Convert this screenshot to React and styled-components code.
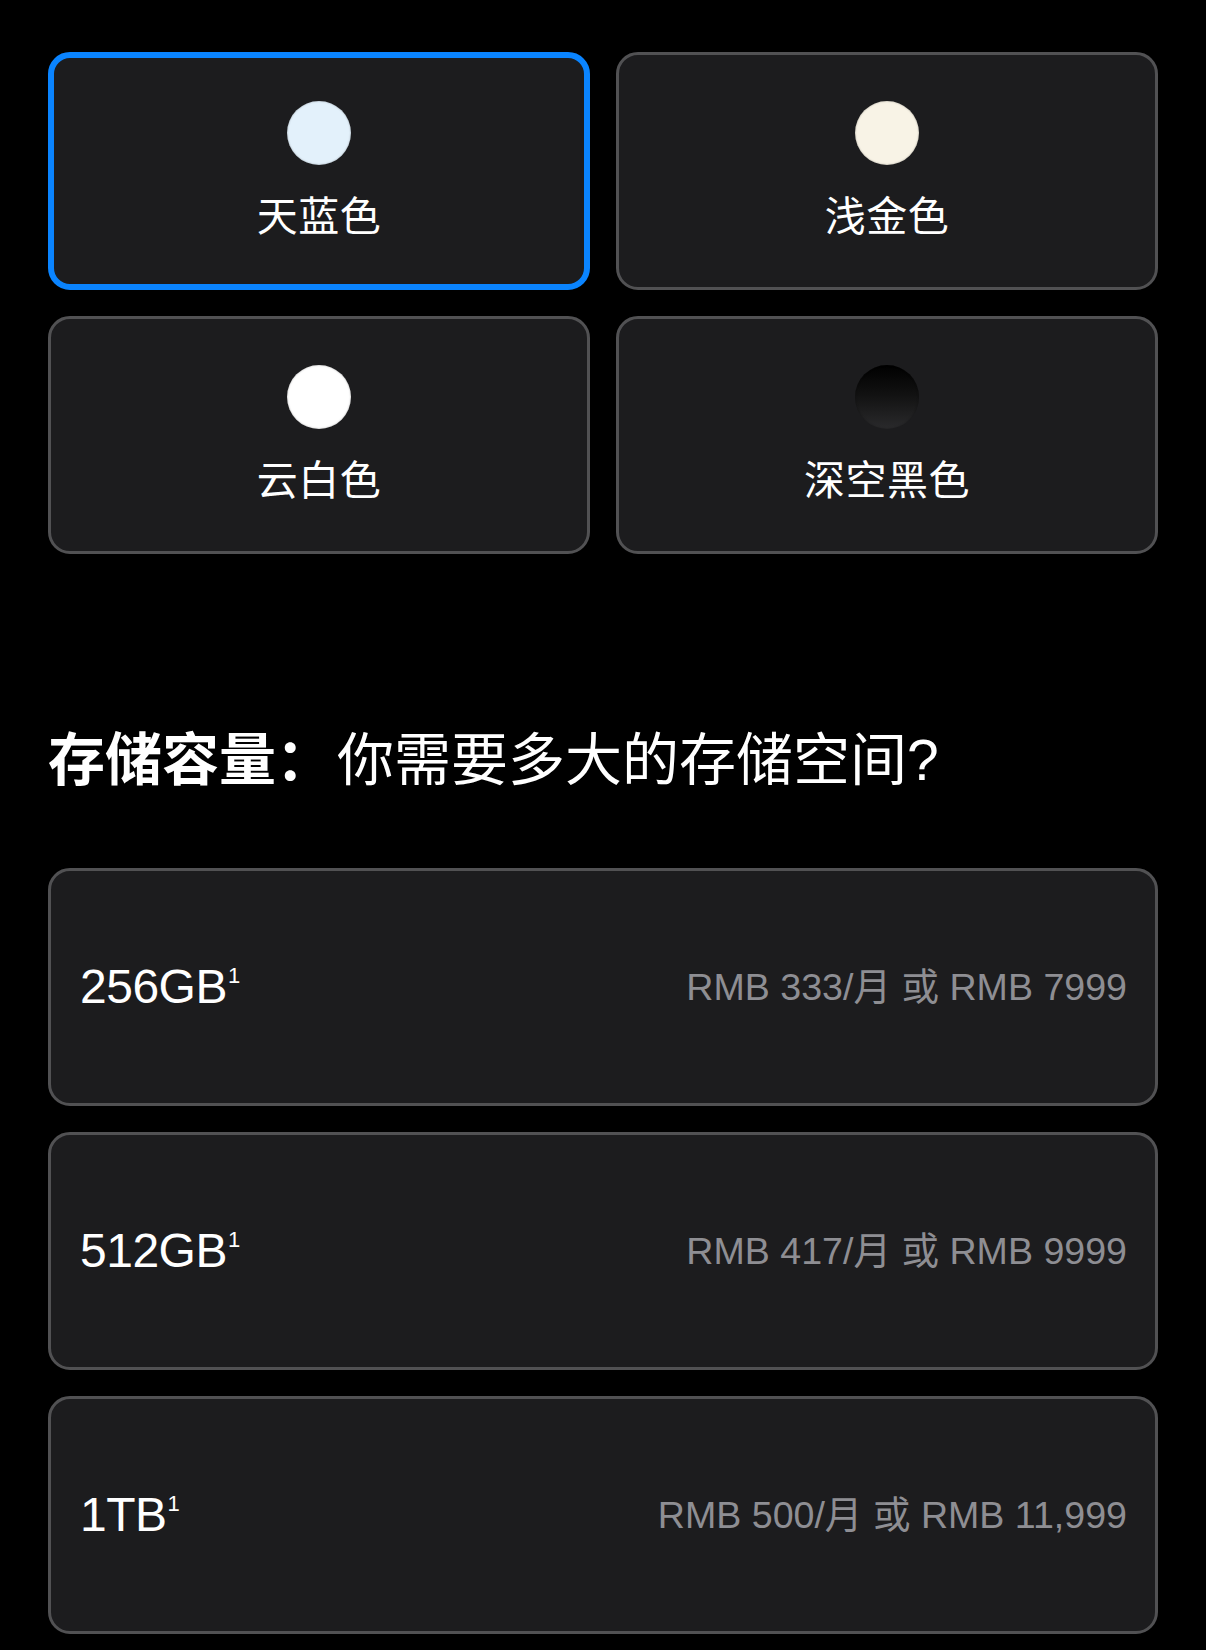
import React from 'react';
import styled, { createGlobalStyle } from 'styled-components';

const GlobalStyle = createGlobalStyle`
  html, body {
    margin: 0;
    padding: 0;
    background: #000;
  }
  body {
    font-family: "Liberation Sans", "Noto Sans CJK SC", sans-serif;
    color: #f5f5f7;
  }
`;

const Page = styled.div`
  padding: 52px 48px 0;
  box-sizing: border-box;
  width: 1206px;
`;

const ColorGrid = styled.div`
  display: grid;
  grid-template-columns: 1fr 1fr;
  gap: 26px;
`;

const ColorCard = styled.div`
  box-sizing: border-box;
  height: 238px;
  background: #1c1c1e;
  border: ${(p) => (p.selected ? '6px solid #0a84ff' : '3px solid #515153')};
  border-radius: 22px;
  display: flex;
  flex-direction: column;
  align-items: center;
  justify-content: center;
  gap: 27px;
`;

const Swatch = styled.span`
  width: 64px;
  height: 64px;
  border-radius: 50%;
  background: ${(p) => p.fill};
  box-shadow: inset 0 0 2px rgba(0, 0, 0, 0.35);
`;

const ColorName = styled.span`
  font-size: 41px;
  line-height: 50px;
  color: #fff;
  letter-spacing: 0.5px;
`;

const Heading = styled.h2`
  margin: 172px 0 74px;
  font-size: 57px;
  line-height: 68px;
  font-weight: 400;
  color: #fff;
`;

const HeadingStrong = styled.strong`
  font-weight: 700;
  margin-right: 4px;
`;

const StorageList = styled.div`
  display: flex;
  flex-direction: column;
  gap: 26px;
`;

const StorageCard = styled.div`
  box-sizing: border-box;
  height: 238px;
  background: #1c1c1e;
  border: 3px solid #515153;
  border-radius: 22px;
  padding: 0 28px 0 29px;
  display: flex;
  align-items: center;
  justify-content: space-between;
`;

const Capacity = styled.span`
  font-size: 48px;
  color: #fff;
  letter-spacing: -0.5px;
  padding-bottom: 2px;
`;

const Note = styled.sup`
  font-size: 22px;
  vertical-align: 20px;
  line-height: 0;
  margin-left: 1px;
`;

const Price = styled.span`
  font-size: 37.6px;
  color: #8e8e93;
  padding-bottom: 8px;
`;

const colors = [
  { name: '天蓝色', fill: '#e3f1fb', selected: true },
  { name: '浅金色', fill: '#f8f3e6' },
  { name: '云白色', fill: '#ffffff' },
  { name: '深空黑色', fill: 'linear-gradient(180deg, #000 0%, #111 45%, #2a2a2c 100%)' },
];

const storage = [
  { size: '256GB', price: 'RMB 333/月 或 RMB 7999' },
  { size: '512GB', price: 'RMB 417/月 或 RMB 9999' },
  { size: '1TB', price: 'RMB 500/月 或 RMB 11,999' },
];

const App = () => {
  return (
    <>
      <GlobalStyle />
      <Page>
        <ColorGrid>
          {colors.map((c) => (
            <ColorCard key={c.name} selected={c.selected}>
              <Swatch fill={c.fill} />
              <ColorName>{c.name}</ColorName>
            </ColorCard>
          ))}
        </ColorGrid>

        <Heading>
          <HeadingStrong>存储容量：</HeadingStrong>你需要多大的存储空间?
        </Heading>

        <StorageList>
          {storage.map((s) => (
            <StorageCard key={s.size}>
              <Capacity>
                {s.size}
                <Note>1</Note>
              </Capacity>
              <Price>{s.price}</Price>
            </StorageCard>
          ))}
        </StorageList>
      </Page>
    </>
  );
};

export default App;
